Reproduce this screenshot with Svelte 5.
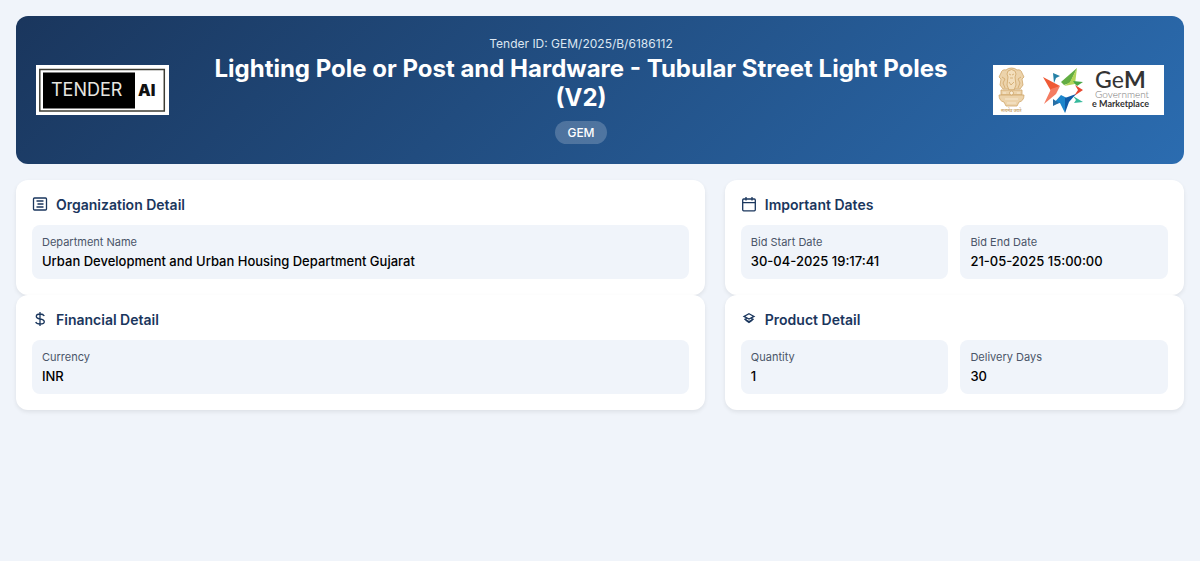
<script>
  const cards = [
    {
      title: 'Organization Detail',
      icon: 'article',
      fields: [{ label: 'Department Name', value: 'Urban Development and Urban Housing Department Gujarat' }]
    },
    {
      title: 'Important Dates',
      icon: 'calendar',
      fields: [
        { label: 'Bid Start Date', value: '30-04-2025 19:17:41' },
        { label: 'Bid End Date', value: '21-05-2025 15:00:00' }
      ]
    },
    {
      title: 'Financial Detail',
      icon: 'dollar',
      fields: [{ label: 'Currency', value: 'INR' }]
    },
    {
      title: 'Product Detail',
      icon: 'layers',
      fields: [
        { label: 'Quantity', value: '1' },
        { label: 'Delivery Days', value: '30' }
      ]
    }
  ];
</script>

<main class="page">
  <header class="banner">
    <svg class="logo" width="133" height="50" viewBox="0 0 133 50" role="img" aria-label="Tender AI">
      <rect width="133" height="50" fill="#fff" />
      <rect x="3.8" y="4.5" width="124.5" height="41.5" fill="#fff" stroke="#3c3c34" stroke-width="1.5" />
      <rect x="7" y="7.5" width="92" height="36" fill="#000" />
      <text x="15" y="31" font-size="18" font-weight="400" fill="#e6e6e0">TENDER</text>
      <text x="102" y="31" font-size="16" font-weight="900" fill="#111">AI</text>
    </svg>

    <div class="heading">
      <div class="tender-id">Tender ID: GEM/2025/B/6186112</div>
      <h1>Lighting Pole or Post and Hardware - Tubular Street Light Poles (V2)</h1>
      <span class="badge">GEM</span>
    </div>

    <svg class="logo" width="171" height="50" viewBox="0 0 171 50" role="img" aria-label="Government e Marketplace">
      <rect width="171" height="50" fill="#fff" />
      <g fill="#ecd3ab" stroke="#cfa669" stroke-width=".8">
        <path d="M13 5q-4-1-5 3l-2 4 2 2-1 6 3 4h17l3-4-1-6 2-2-2-4q-1-4-5-3-2-2-5.500-2T13 5z" />
        <path d="M15 6q-2 3 0 6l-1 8 2 5h5l2-5-1-8q2-3 0-6-3.500-3-7 0z" fill="#f3dfbd" />
        <path d="M9 12l3 2-2 4 2 5M28 12l-3 2 2 4-2 5M16 9l2 1M21 9l-2 1M17 13h3M16 17l2 3 3-3" fill="none" />
        <path d="M8 25h21v5H8z" />
        <path d="M6 30h25q0 6-5 7l-2 4H13l-2-4q-5-1-5-7z" />
        <path d="M12 34h13M14 38h9M10 28h3M24 28h3" stroke="#fbf0dc" fill="none" />
        <circle cx="18.500" cy="28" r="2" fill="#fbf0dc" />
      </g>
      <text x="8" y="47" font-size="4" font-weight="600" fill="#c8a46c" class="hindi">सत्यमेव जयते</text>

      <path d="M50 12l17 9-9 5z" fill="#ef5a35" />
      <path d="M58 24l9-3-4 8-12 10z" fill="#f47c62" />
      <path d="M60 8l7 3-4 2-2 5z" fill="#2581a6" />
      <path d="M68 17L84 3l-7 15-6 2z" fill="#62ad43" />
      <path d="M84 3l-2 16-11 2 6-4z" fill="#b2d459" />
      <path d="M80 16l10 1-6 4-2-2z" fill="#49a747" />
      <path d="M82 20l8 5-9 6 4-6z" fill="#e84730" />
      <path d="M80 31l10 6-9 1 2-3z" fill="#35b99c" />
      <path d="M68 30l6 3-2 15-5-10-7 1z" fill="#1d86cc" />
      <path d="M72 33l11-4-7 8-4 11z" fill="#105ca8" />
      <path d="M60 34l6 4-6 3z" fill="#286fa5" />

      <text x="102" y="23" font-size="23" fill="#343434" class="brand"><tspan font-weight="500">G</tspan><tspan font-weight="400">e</tspan><tspan font-weight="700">M</tspan></text>
      <text x="102" y="33" font-size="10" font-weight="300" fill="#777" class="brand">Government</text>
      <text x="99" y="42" font-size="9" font-weight="700" fill="#333" class="brand">e Marketplace</text>
    </svg>
  </header>

  <div class="cards">
    {#each cards as card}
      <section class="card">
        <h2>
          <svg class="icon" width="16" height="16" viewBox="0 0 16 16" aria-hidden="true">
            {#if card.icon === 'article'}
              <rect x="1.500" y="1" width="13" height="12" rx="1" />
              <path d="M4.500 4h7M5.500 7h6M4.500 10h7" />
            {:else if card.icon === 'calendar'}
              <rect x="1.700" y="2" width="12.600" height="11.800" rx="1" />
              <path d="M1.700 5.700h12.600M5 0v3.400M11 0v3.400" />
            {:else if card.icon === 'dollar'}
              <path d="M8 0v14M12.300 4Q11.300 2 8 2 4.300 2 4.300 4.500 4.300 6.300 8 7q4.300.7 4.300 2.700Q12.300 12 8 12 4.500 12 3.700 10" />
            {:else}
              <path d="M8 1.700l5 2.700-5 2.700-5-2.700zM3.300 7L8 9.500 12.700 7M5 5.500v3L8 10.500l3-2v-3" />
            {/if}
          </svg>
          {card.title}
        </h2>
        <dl class="fields">
          {#each card.fields as field}
            <div class="field">
              <dt>{field.label}</dt>
              <dd>{field.value}</dd>
            </div>
          {/each}
        </dl>
      </section>
    {/each}
  </div>
</main>

<style>
  :global(body) {
    margin: 0;
    background: #f0f4fa;
    font-family: Inter, sans-serif;
  }
  .page {
    display: grid;
    gap: 16px;
    padding: 16px;
  }
  .banner {
    display: flex;
    align-items: center;
    padding: 20px;
    border-radius: 12px;
    color: #fff;
    background: linear-gradient(135deg, #1a365d, #2b6cb0);
  }
  .logo {
    flex: none;
  }
  .brand {
    font-family: Lato, sans-serif;
  }
  .hindi {
    font-family: "Noto Sans", sans-serif;
  }
  .heading {
    flex: 1;
    padding: 0 20px;
    text-align: center;
  }
  .tender-id {
    margin-bottom: 3px;
    font-size: 12px;
    line-height: 15px;
    color: #dce6f1;
  }
  h1 {
    margin: 0 0 9px;
    font-size: 24px;
    line-height: 29px;
    font-weight: 700;
  }
  .badge {
    display: block;
    width: fit-content;
    margin: 0 auto;
    padding: 4px 12px;
    border-radius: 12px;
    font-size: 12px;
    line-height: 15px;
    font-weight: 500;
    background: rgba(255, 255, 255, 0.2);
  }
  .cards {
    display: grid;
    grid-template-columns: 3fr 2fr;
    column-gap: 20px;
  }
  .card {
    padding: 16px;
    border-radius: 12px;
    background: #fff;
    box-shadow: 0 2px 4px rgba(0, 0, 0, 0.08);
  }
  h2 {
    display: flex;
    align-items: center;
    gap: 8px;
    margin: 0 0 12px;
    font-size: 14px;
    line-height: 17px;
    font-weight: 600;
    color: #1a365d;
  }
  .icon {
    fill: none;
    stroke: currentColor;
    stroke-width: 1.3;
    overflow: visible;
  }
  .fields {
    display: grid;
    grid-auto-columns: 1fr;
    grid-auto-flow: column;
    gap: 12px;
    margin: 0;
  }
  .field {
    padding: 10px;
    border-radius: 8px;
    background: #f0f4fa;
  }
  dt {
    margin-bottom: 4px;
    font-size: 11px;
    line-height: 14px;
    color: #4a5568;
  }
  dd {
    margin: 0;
    font-size: 13px;
    line-height: 16px;
    font-weight: 500;
    color: #000;
  }
</style>
